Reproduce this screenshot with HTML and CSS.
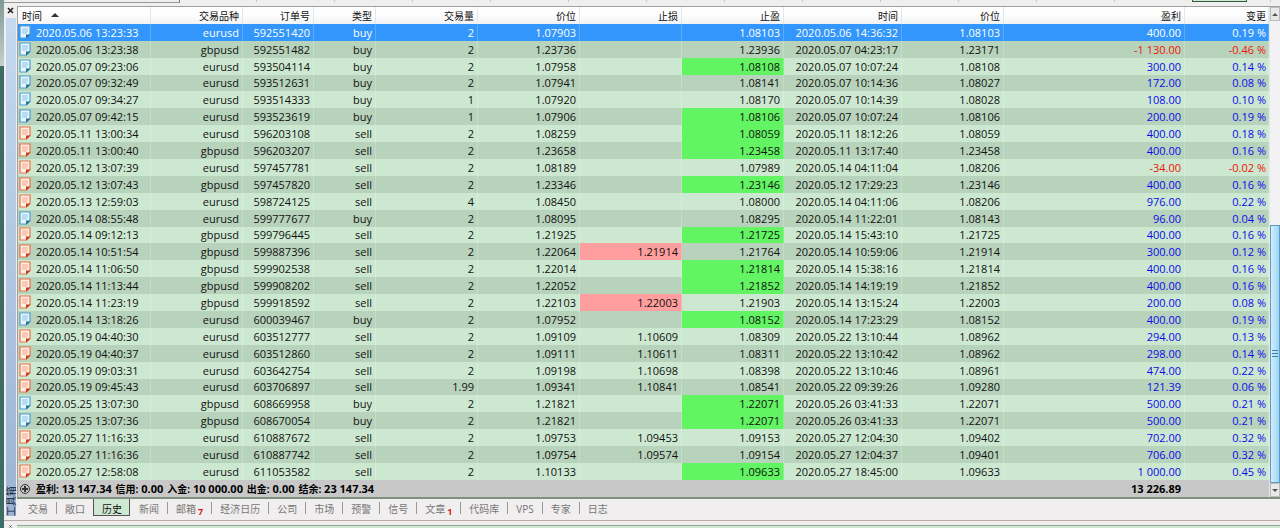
FILE: index.html
```html
<!doctype html>
<html lang="zh-CN">
<head>
	<meta charset="UTF-8">
	<title>工具箱 - 历史</title>

	<link rel="stylesheet" href="styles.css">

</head>
<body>
	<svg class="sprite" aria-hidden="true">
		<symbol id="doc" viewBox="0 0 12 14">
			<path d="M1 1h10v8.500l-3.500 3.500H1z" fill="var(--paper)" stroke="currentColor" stroke-width="1.2"/>
			<path d="M3 4h6M3 6h6M3 8h5" stroke="currentColor" opacity=".6"/>
			<path d="M7 13.600V9.500h4.600z" fill="var(--fold)"/>
		</symbol>
		<symbol id="cross" viewBox="0 0 7 7">
			<path d="M1 1l5 5M6 1l-5 5" stroke="#222" stroke-width="1.6"/>
		</symbol>
	</svg>

	<div class="window">
		<div class="topStrip"><i></i><b></b></div>

		<section class="toolbox">
			<aside class="caption">
				<button class="close" aria-label="关闭"><svg><use href="#cross"/></svg></button>
				<div class="grip"><span>工具箱</span></div>
			</aside>

			<div class="content">
				<div class="listArea">
					<table class="history">
						<colgroup>
							<col class="time"><col class="symbol"><col class="order"><col class="type">
							<col class="price"><col class="price"><col class="price"><col class="price">
							<col class="closeTime"><col class="price"><col><col class="change">
						</colgroup>
						<thead>
							<tr>
								<th>时间 <span class="sort"></span></th>
								<th>交易品种</th>
								<th>订单号</th>
								<th>类型</th>
								<th>交易量</th>
								<th>价位</th>
								<th>止损</th>
								<th>止盈</th>
								<th>时间</th>
								<th>价位</th>
								<th>盈利</th>
								<th>变更</th>
							</tr>
						</thead>
						<tbody></tbody>
						<tfoot>
							<tr>
								<td colspan="10"><i class="plus"></i><span>盈利:</span> 13 147.34 <span>信用:</span> 0.00 <span>入金:</span> 10 000.00 <span>出金:</span> 0.00 <span>结余:</span> 23 147.34</td>
								<td>13 226.89</td>
								<td></td>
							</tr>
						</tfoot>
					</table>
					<div class="scrollbar">
						<button class="up" aria-label="向上"></button>
						<div class="track"></div>
						<div class="thumb"><i></i></div>
						<button class="down" aria-label="向下"></button>
					</div>
				</div>

				<nav class="tabs">
					<a href="#">交易</a>
					<a href="#">敞口</a>
					<a href="#" class="active">历史</a>
					<a href="#">新闻</a>
					<a href="#">邮箱<sub>7</sub></a>
					<a href="#">经济日历</a>
					<a href="#">公司</a>
					<a href="#">市场</a>
					<a href="#">预警</a>
					<a href="#">信号</a>
					<a href="#">文章<sub>1</sub></a>
					<a href="#">代码库</a>
					<a href="#">VPS</a>
					<a href="#">专家</a>
					<a href="#">日志</a>
				</nav>
			</div>
		</section>

		<section class="nextPanel">
			<button class="close" aria-label="关闭"><svg><use href="#cross"/></svg></button>
			<div class="nextContent"></div>
		</section>
	</div>

	<script src="history.js"></script>
</body>
</html>
```
FILE: styles.css
```css
* {
	box-sizing: border-box;
}
body {
	margin: 0;
	background: #cfe8d2;
	color: #111;
	font: 11px/16px "Open Sans", "Noto Sans CJK SC", sans-serif;
	overflow: hidden;
}
button {
	padding: 0;
	border: none;
	background: none;
	font: inherit;
}
.sprite {
	position: absolute;
	width: 0;
	height: 0;
}

/* the 4px on the left is the edge of the window behind */
.window {
	min-height: 100vh;
	display: flex;
	flex-direction: column;
	padding-left: 4px;
	background:
		linear-gradient(#7f9a96, #c3cfcd 66px, #3d6b66 66px) left / 4px 100% no-repeat,
		#f0eeee;
}
.topStrip {
	height: 6px;
	display: flex;
	justify-content: space-between;
	padding-right: 33px;
	background:
		repeating-linear-gradient(90deg, transparent 0 77px, #c4c4c4 77px 78px) 175px 0 / 100% 2px no-repeat,
		#efefee;
}
.topStrip i {
	width: 176px;
	height: 3px;
	border-right: 1px solid #777;
	border-bottom: 1px solid #999;
	background: #efefee;
}
.topStrip b {
	width: 55px;
	height: 2px;
	background: #cfe8d2;
	border: 1px solid #2f5a3c;
	border-top: none;
}

.toolbox {
	display: flex;
}
.caption {
	width: 13px;
	display: flex;
	flex-direction: column;
	align-items: center;
}
.close {
	width: 13px;
	height: 12px;
	display: flex;
	justify-content: center;
	padding-top: 1px;
}
.close svg {
	width: 7px;
	height: 7px;
}
.grip {
	flex: 1;
	width: 10px;
	margin-bottom: 4px;
	display: flex;
	justify-content: flex-end;
	writing-mode: vertical-rl;
	background: linear-gradient(#c5d9f0, #9cb3d2);
}
.grip span {
	line-height: 10px;
	font-size: 10px;
	color: #14283c;
	text-orientation: sideways;
	transform: rotate(180deg);
}

.content {
	flex: 1;
	min-width: 0;
}
.listArea {
	display: flex;
	border-top: 1px solid #a0a0a0;
	border-left: 1px solid #a0a0a0;
	border-bottom: 2px solid #7f8f82;
}

.history {
	flex: 1;
	width: 0;
	table-layout: fixed;
	border-spacing: 0;
	text-align: right;
	white-space: nowrap;
}
.history col.time { width: 133px; }
.history col.symbol { width: 92px; }
.history col.order { width: 71px; }
.history col.type { width: 62px; }
.history col.price { width: 102px; }
.history col.closeTime { width: 118px; }
.history col.change { width: 84px; }

.history th,
.history td {
	height: 17px;
	padding: 0 3px 0 0;
	line-height: 16px;
	font-weight: normal;
	border-right: 1px solid rgba(255, 255, 255, .2);
	overflow: hidden;
}
.history th {
	font-size: 10px;
	background: linear-gradient(#fff 40%, #f1f2f3);
	border-right-color: #e4e6e8;
}
.history th:first-child,
.history td:first-child {
	text-align: left;
}
.history th:first-child {
	padding-left: 4px;
}
.history th:last-child,
.history td:last-child {
	padding-right: 2px;
}
.sort {
	display: inline-block;
	margin-left: 6px;
	vertical-align: 3px;
	border: 4px solid transparent;
	border-top: none;
	border-bottom: 4px solid #333;
}

.history tbody tr { background: #cde8d0; }
.history tbody tr:nth-child(even) { background: #b8d3bb; }
.history tbody tr.selected { background: #3296fc; color: #fff; }
.history tbody tr:nth-child(9n+4) td {
	height: 16px;
}
.history td.hitProfit { background: #62f462; }
.history td.hitStop { background: #ff9e9e; }
.history .plusAmount { color: #0a0aec; }
.history .minusAmount { color: #f01408; }
.history .selected .plusAmount { color: #fff; }

.doc {
	width: 12px;
	height: 14px;
	margin: 0 5px 0 1px;
	vertical-align: -2px;
}
.doc.buy { color: #4a9fd0; --paper: #eaf6ff; --fold: #256f9c; }
.doc.sell { color: #ec7048; --paper: #fff0e6; --fold: #c43c1c; }

.history tfoot td {
	background: #c8c8c8;
	border-right-color: transparent;
	font-weight: bold;
	color: #000;
}
.history tfoot span {
	font-size: 10px;
}
.history tfoot span + span {
	margin-left: 1px;
}
.plus {
	display: inline-block;
	width: 10px;
	height: 10px;
	margin: 0 6px 0 2px;
	vertical-align: -1px;
	border: 1px solid #333;
	border-radius: 50%;
	background:
		linear-gradient(#333, #333) center / 6px 2px no-repeat,
		linear-gradient(#333, #333) center / 2px 6px no-repeat;
}

.scrollbar {
	width: 11px;
	display: flex;
	flex-direction: column;
	border-left: 1px solid #e6e6e6;
	background: #f2f1f3;
}
.scrollbar button {
	height: 14px;
	border: 1px solid #bbb;
	background: #e8e8e8;
	display: flex;
	align-items: center;
	justify-content: center;
}
.scrollbar button::before {
	content: '';
	border: 3px solid transparent;
	border-top: none;
	border-bottom: 3px solid #555;
}
.scrollbar .down::before {
	transform: rotate(180deg);
}
.track {
	flex: 205;
}
.thumb {
	flex: 258;
	display: flex;
	align-items: center;
	justify-content: center;
	border: 1px solid #5c9cc4;
	background: linear-gradient(90deg, #d4effc, #9ad6f6);
}
.thumb i {
	width: 6px;
	height: 7px;
	background: repeating-linear-gradient(#3f7fa6 0 1px, transparent 1px 3px);
}

.tabs {
	display: flex;
	height: 21px;
	padding-left: 2px;
	font-size: 10px;
	line-height: 20px;
}
.tabs a {
	height: 17px;
	padding: 0 8px 0 9px;
	color: #777;
	text-decoration: none;
	position: relative;
}
.tabs a + a::before {
	content: '';
	position: absolute;
	left: 0;
	top: 3px;
	height: 12px;
	border-left: 1px solid #999;
}
.tabs a.active {
	padding: 0 7px 0 8px;
	background: #cfe8d2;
	border: 1px solid #555;
	border-top: none;
	color: #111;
}
.tabs a.active::before,
.tabs a.active + a::before {
	display: none;
}
.tabs sub {
	margin-left: 2px;
	font: bold 9px/9px "Open Sans", sans-serif;
	color: #d8181c;
	vertical-align: -2px;
}

.nextPanel {
	flex: 1;
	min-height: 7px;
	display: flex;
	border-top: 1px solid #b9a9a9;
}
.nextPanel .close {
	height: auto;
	padding-top: 4px;
	overflow: hidden;
	align-items: flex-start;
}
.nextPanel .close svg {
	height: 3px;
}
.nextContent {
	flex: 1;
	margin-top: 4px;
	border-top: 1px solid #93a597;
	background: #cfe8d2;
}
```
FILE: history.js
```js
// time, symbol, order, type, volume, price, s/l, t/p, close time, close price, profit, change
// "*" after a level marks the one that closed the trade
var deals = [
	'05.06 13:23:33|eurusd|592551420|buy|2|1.07903||1.08103|05.06 14:36:32|1.08103|400.00|0.19',
	'05.06 13:23:38|gbpusd|592551482|buy|2|1.23736||1.23936|05.07 04:23:17|1.23171|-1 130.00|-0.46',
	'05.07 09:23:06|eurusd|593504114|buy|2|1.07958||1.08108*|05.07 10:07:24|1.08108|300.00|0.14',
	'05.07 09:32:49|eurusd|593512631|buy|2|1.07941||1.08141|05.07 10:14:36|1.08027|172.00|0.08',
	'05.07 09:34:27|eurusd|593514333|buy|1|1.07920||1.08170|05.07 10:14:39|1.08028|108.00|0.10',
	'05.07 09:42:15|eurusd|593523619|buy|1|1.07906||1.08106*|05.07 10:07:24|1.08106|200.00|0.19',
	'05.11 13:00:34|eurusd|596203108|sell|2|1.08259||1.08059*|05.11 18:12:26|1.08059|400.00|0.18',
	'05.11 13:00:40|gbpusd|596203207|sell|2|1.23658||1.23458*|05.11 13:17:40|1.23458|400.00|0.16',
	'05.12 13:07:39|eurusd|597457781|sell|2|1.08189||1.07989|05.14 04:11:04|1.08206|-34.00|-0.02',
	'05.12 13:07:43|gbpusd|597457820|sell|2|1.23346||1.23146*|05.12 17:29:23|1.23146|400.00|0.16',
	'05.13 12:59:03|eurusd|598724125|sell|4|1.08450||1.08000|05.14 04:11:06|1.08206|976.00|0.22',
	'05.14 08:55:48|eurusd|599777677|buy|2|1.08095||1.08295|05.14 11:22:01|1.08143|96.00|0.04',
	'05.14 09:12:13|gbpusd|599796445|sell|2|1.21925||1.21725*|05.14 15:43:10|1.21725|400.00|0.16',
	'05.14 10:51:54|gbpusd|599887396|sell|2|1.22064|1.21914*|1.21764|05.14 10:59:06|1.21914|300.00|0.12',
	'05.14 11:06:50|gbpusd|599902538|sell|2|1.22014||1.21814*|05.14 15:38:16|1.21814|400.00|0.16',
	'05.14 11:13:44|gbpusd|599908202|sell|2|1.22052||1.21852*|05.14 14:19:19|1.21852|400.00|0.16',
	'05.14 11:23:19|gbpusd|599918592|sell|2|1.22103|1.22003*|1.21903|05.14 13:15:24|1.22003|200.00|0.08',
	'05.14 13:18:26|eurusd|600039467|buy|2|1.07952||1.08152*|05.14 17:23:29|1.08152|400.00|0.19',
	'05.19 04:40:30|eurusd|603512777|sell|2|1.09109|1.10609|1.08309|05.22 13:10:44|1.08962|294.00|0.13',
	'05.19 04:40:37|eurusd|603512860|sell|2|1.09111|1.10611|1.08311|05.22 13:10:42|1.08962|298.00|0.14',
	'05.19 09:03:31|eurusd|603642754|sell|2|1.09198|1.10698|1.08398|05.22 13:10:46|1.08961|474.00|0.22',
	'05.19 09:45:43|eurusd|603706897|sell|1.99|1.09341|1.10841|1.08541|05.22 09:39:26|1.09280|121.39|0.06',
	'05.25 13:07:30|gbpusd|608669958|buy|2|1.21821||1.22071*|05.26 03:41:33|1.22071|500.00|0.21',
	'05.25 13:07:36|gbpusd|608670054|buy|2|1.21821||1.22071*|05.26 03:41:33|1.22071|500.00|0.21',
	'05.27 11:16:33|eurusd|610887672|sell|2|1.09753|1.09453|1.09153|05.27 12:04:30|1.09402|702.00|0.32',
	'05.27 11:16:36|eurusd|610887742|sell|2|1.09754|1.09574|1.09154|05.27 12:04:37|1.09401|706.00|0.32',
	'05.27 12:58:08|eurusd|611053582|sell|2|1.10133||1.09633*|05.27 18:45:00|1.09633|1 000.00|0.45'
];

var html = deals.map(function(line, row) {
	var d = line.split('|');
	var cells = d.map(function(value, i) {
		var cls = '', text = value.replace('*', '');
		if (value.slice(-1) === '*') {
			cls = i === 6 ? 'hitStop' : 'hitProfit';
		}
		if (i === 0 || i === 8) {
			text = '2020.' + text;
		}
		if (i === 0) {
			text = '<svg class="doc ' + d[3] + '"><use href="#doc"/></svg>' + text;
		}
		if (i >= 10) {
			cls = value.charAt(0) === '-' ? 'minusAmount' : 'plusAmount';
		}
		if (i === 11) {
			text += ' %';
		}
		return '<td class="' + cls + '">' + text + '</td>';
	});
	return '<tr' + (row === 0 ? ' class="selected"' : '') + '>' + cells.join('') + '</tr>';
});
document.querySelector('.history tbody').innerHTML = html.join('');
```
